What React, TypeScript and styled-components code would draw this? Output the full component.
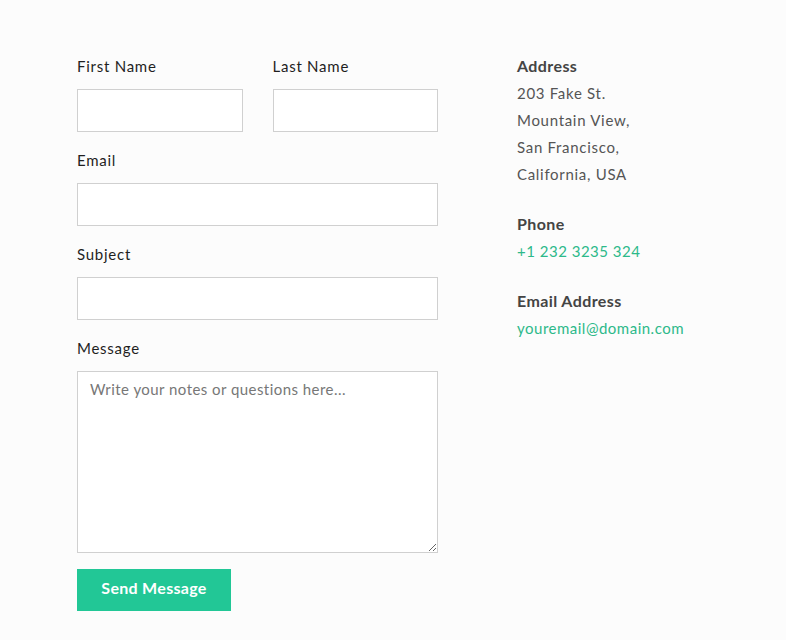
import React from "react";
import styled, { createGlobalStyle } from "styled-components";

const Global = createGlobalStyle`
  html, body { margin: 0; padding: 0; background: #fcfcfc; }
  body { font-family: Lato, "Noto Sans", sans-serif; }
  * { box-sizing: border-box; }
`;

const Page = styled.div`
  display: flex;
  align-items: flex-start;
  gap: 79px;
  padding: 54px 0 0 77px;
  min-height: 640px;
`;

const Form = styled.form`
  width: 361px;
  display: flex;
  flex-direction: column;
`;

const Row = styled.div`
  display: flex;
  gap: 30px;
`;

const Field = styled.div`
  display: flex;
  flex-direction: column;
  flex: 1;
  margin-bottom: 16px;
`;

const Label = styled.label`
  display: block;
  font-size: 15px;
  line-height: 24px;
  color: #1f1f1f;
  margin: 0 0 11px;
  letter-spacing: 0.75px;
`;

const Input = styled.input`
  height: 43px;
  width: 100%;
  border: 1px solid #d0d0d0;
  background: #fff;
  padding: 0 12px;
  font-family: inherit;
  font-size: 15px;
  outline: none;
`;

const TextArea = styled.textarea`
  height: 182px;
  width: 100%;
  border: 1px solid #d0d0d0;
  background: #fff;
  padding: 7px 12px;
  font-family: inherit;
  font-size: 15px;
  line-height: 20px;
  letter-spacing: 0.45px;
  outline: none;
  resize: vertical;
  &::placeholder { color: #777; }
`;

const Button = styled.button`
  width: 154px;
  height: 42px;
  border: none;
  background: #22c796;
  color: #fff;
  font-family: inherit;
  font-size: 16px;
  font-weight: 700;
  letter-spacing: 0.3px;
  cursor: pointer;
  padding: 0 0 5px;
`;

const Info = styled.div`
  display: flex;
  flex-direction: column;
  gap: 24px;
`;

const Block = styled.div`
  display: flex;
  flex-direction: column;
`;

const Heading = styled.div`
  font-size: 16px;
  font-weight: 700;
  line-height: 24px;
  margin-bottom: 2px;
  color: #444;
  letter-spacing: 0.4px;
`;

const Line = styled.div<{ $accent?: boolean }>`
  font-size: 15px;
  line-height: 27px;
  color: ${(p) => (p.$accent ? "#2db98a" : "#555")};
  letter-spacing: ${(p) => (p.$accent ? "0.5px" : "0.7px")};
`;

export default function App() {
  return (
    <>
      <Global />
      <Page>
        <Form onSubmit={(e) => e.preventDefault()}>
          <Row>
            <Field>
              <Label>First Name</Label>
              <Input type="text" />
            </Field>
            <Field>
              <Label>Last Name</Label>
              <Input type="text" />
            </Field>
          </Row>
          <Field>
            <Label>Email</Label>
            <Input type="email" />
          </Field>
          <Field>
            <Label>Subject</Label>
            <Input type="text" />
          </Field>
          <Field>
            <Label>Message</Label>
            <TextArea placeholder="Write your notes or questions here..." />
          </Field>
          <div>
            <Button type="submit">Send Message</Button>
          </div>
        </Form>
        <Info>
          <Block>
            <Heading>Address</Heading>
            <Line>203 Fake St.</Line>
            <Line>Mountain View,</Line>
            <Line>San Francisco,</Line>
            <Line>California, USA</Line>
          </Block>
          <Block>
            <Heading>Phone</Heading>
            <Line $accent>+1 232 3235 324</Line>
          </Block>
          <Block>
            <Heading>Email Address</Heading>
            <Line $accent>youremail@domain.com</Line>
          </Block>
        </Info>
      </Page>
    </>
  );
}
